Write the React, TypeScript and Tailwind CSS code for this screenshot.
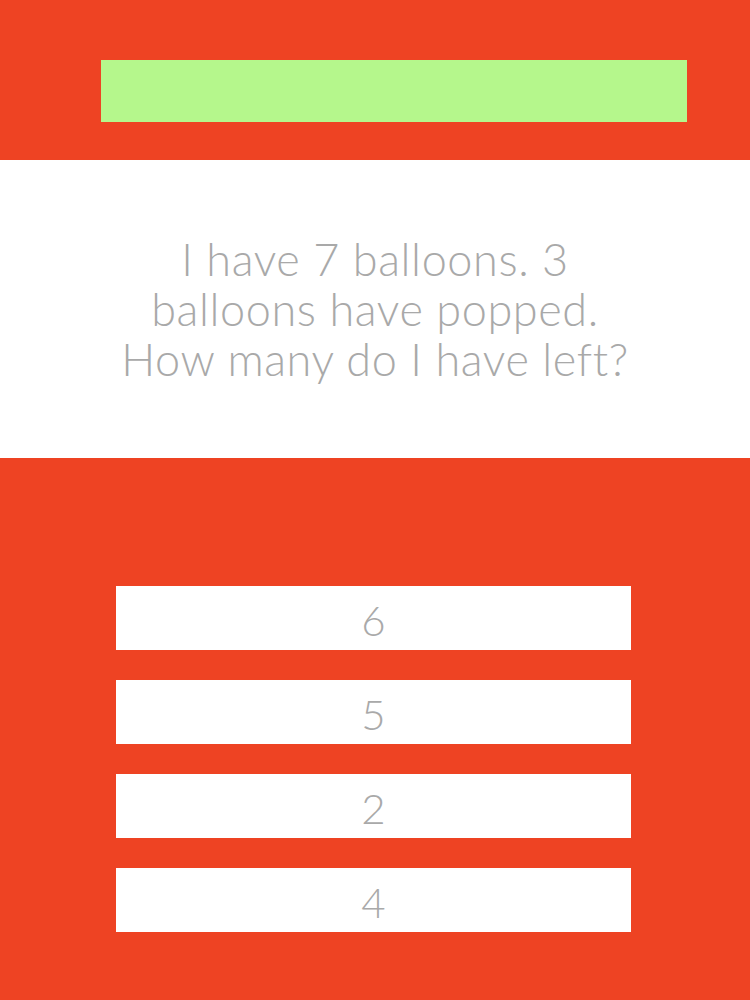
import React from "react";

export default function App() {
  const answers = ["6", "5", "2", "4"];
  return (
    <div
      className="w-[750px] h-[1000px] bg-[#ee4323] flex flex-col"
      style={{ fontFamily: "Lato, 'Open Sans', sans-serif" }}
    >
      <div className="h-[160px] pt-[60px] pl-[101px]">
        <div className="w-[586px] h-[62px] bg-[#b5f78c]" />
      </div>
      <div className="h-[298px] bg-white flex items-center justify-center">
        <p className="text-center text-[#a9a9a9] font-light text-[45px] leading-[50px] tracking-[0.6px]">
          I have 7 balloons. 3
          <br />
          balloons have popped.
          <br />
          How many do I have left?
        </p>
      </div>
      <div className="pt-[128px] pl-[116px] flex flex-col gap-[30px]">
        {answers.map((a) => (
          <div
            key={a}
            className="w-[515px] h-[64px] pt-[4px] bg-white flex items-center justify-center text-[#a9a9a9] font-light text-[42px]"
          >
            {a}
          </div>
        ))}
      </div>
    </div>
  );
}
